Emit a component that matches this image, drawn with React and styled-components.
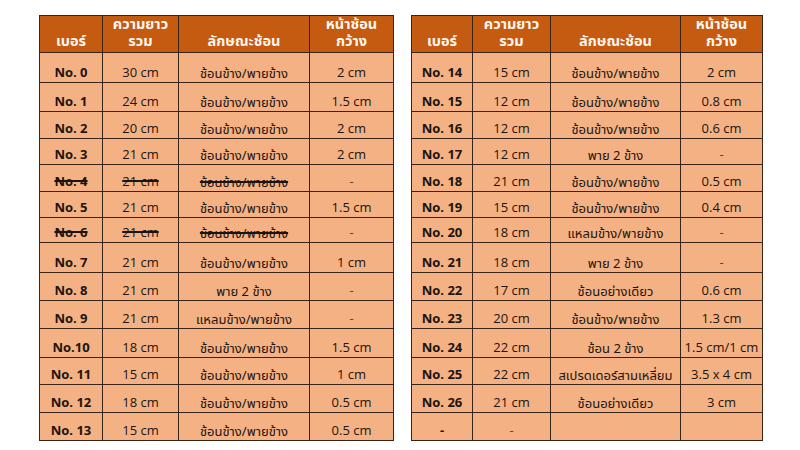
import React from "react";
import styled, { createGlobalStyle } from "styled-components";

const GlobalStyle = createGlobalStyle`
  html, body {
    margin: 0;
    padding: 0;
    background: #ffffff;
  }
  body {
    font-family: "Open Sans", "Noto Sans Thai", "Noto Sans", "DejaVu Sans", sans-serif;
  }
`;

// row heights shared by both tables (header first)
const rowHeights = [37, 30, 29, 27, 26, 27, 26, 25, 30, 28, 28, 29, 27, 28, 28];

const SIDE = "ช้อนข้าง/พายข้าง";

const leftRows = [
  ["No. 0", "30 cm", SIDE, "2 cm"],
  ["No. 1", "24 cm", SIDE, "1.5 cm"],
  ["No. 2", "20 cm", SIDE, "2 cm"],
  ["No. 3", "21 cm", SIDE, "2 cm"],
  ["No. 4", "21 cm", SIDE, "-", true],
  ["No. 5", "21 cm", SIDE, "1.5 cm"],
  ["No. 6", "21 cm", SIDE, "-", true],
  ["No. 7", "21 cm", SIDE, "1 cm"],
  ["No. 8", "21 cm", "พาย 2 ข้าง", "-"],
  ["No. 9", "21 cm", "แหลมข้าง/พายข้าง", "-"],
  ["No.10", "18 cm", SIDE, "1.5 cm"],
  ["No. 11", "15 cm", SIDE, "1 cm"],
  ["No. 12", "18 cm", SIDE, "0.5 cm"],
  ["No. 13", "15 cm", SIDE, "0.5 cm"],
];

const rightRows = [
  ["No. 14", "15 cm", SIDE, "2 cm"],
  ["No. 15", "12 cm", SIDE, "0.8 cm"],
  ["No. 16", "12 cm", SIDE, "0.6 cm"],
  ["No. 17", "12 cm", "พาย 2 ข้าง", "-"],
  ["No. 18", "21 cm", SIDE, "0.5 cm"],
  ["No. 19", "15 cm", SIDE, "0.4 cm"],
  ["No. 20", "18 cm", "แหลมข้าง/พายข้าง", "-"],
  ["No. 21", "18 cm", "พาย 2 ข้าง", "-"],
  ["No. 22", "17 cm", "ช้อนอย่างเดียว", "0.6 cm"],
  ["No. 23", "20 cm", SIDE, "1.3 cm"],
  ["No. 24", "22 cm", "ช้อน 2 ข้าง", "1.5 cm/1 cm"],
  ["No. 25", "22 cm", "สเปรดเดอร์สามเหลี่ยม", "3.5 x 4 cm"],
  ["No. 26", "21 cm", "ช้อนอย่างเดียว", "3 cm"],
  ["-", "-", "", ""],
];

const SizeTable = ({ rows, widths }) => (
  <Table style={{ width: widths.reduce((a, b) => a + b, 0) }}>
    <colgroup>
      {widths.map((w, i) => (
        <col key={i} style={{ width: w }} />
      ))}
    </colgroup>
    <thead>
      <tr style={{ height: rowHeights[0] }}>
        <Th>
          <HeadLine>เบอร์</HeadLine>
        </Th>
        <Th>
          <HeadLine>ความยาว</HeadLine>
          <HeadLine>รวม</HeadLine>
        </Th>
        <Th>
          <HeadLine>ลักษณะช้อน</HeadLine>
        </Th>
        <Th>
          <HeadLine>หน้าช้อน</HeadLine>
          <HeadLine>กว้าง</HeadLine>
        </Th>
      </tr>
    </thead>
    <tbody>
      {rows.map((r, i) => (
        <tr key={i} style={{ height: rowHeights[i + 1] }}>
          <Td $bold $struck={r[4]}>{r[0]}</Td>
          <Td $struck={r[4]} $dim={r[1] === "-"}>{r[1]}</Td>
          <Td $struck={r[4]} $thai>{r[2]}</Td>
          <Td $dim={r[3] === "-"}>{r[3]}</Td>
        </tr>
      ))}
    </tbody>
  </Table>
);

const App = () => (
  <>
    <GlobalStyle />
    <Page>
      <SizeTable rows={leftRows} widths={[63, 76, 131, 84]} />
      <SizeTable rows={rightRows} widths={[61, 78, 130, 82]} />
    </Page>
  </>
);

const Page = styled.div`
  display: flex;
  gap: 17px;
  padding: 15px 0 0 39px;
  width: 800px;
  height: 450px;
  box-sizing: border-box;
`;

const Table = styled.table`
  border-collapse: collapse;
  table-layout: fixed;
  background: #f4b183;
  height: 425px;
`;

const Th = styled.th`
  background: #c55a11;
  color: #fff6ef;
  font-family: "Noto Sans Thai", "Open Sans", "DejaVu Sans", sans-serif;
  font-weight: 700;
  font-size: 14.5px;
  text-align: center;
  vertical-align: bottom;
  padding: 0 0 1px;
  border: 1px solid #3a2416;
`;

const HeadLine = styled.div`
  height: 17px;
  line-height: 17px;
  white-space: nowrap;
`;

const Td = styled.td`
  color: ${(p) => (p.$dim ? "#5a4030" : "#1c1410")};
  font-family: ${(p) =>
    p.$thai
      ? `"Noto Sans Thai", "Open Sans", sans-serif`
      : `"Open Sans", "Noto Sans", sans-serif`};
  font-weight: ${(p) => (p.$bold ? 700 : 400)};
  font-size: 13px;
  text-align: center;
  vertical-align: bottom;
  white-space: nowrap;
  padding: ${(p) => (p.$thai ? "0" : "0 0 2px")};
  line-height: 15px;
  border: 1px solid #3a2416;
  text-decoration: ${(p) => (p.$struck ? "line-through" : "none")};
  text-decoration-thickness: 1.5px;
`;

export default App;
